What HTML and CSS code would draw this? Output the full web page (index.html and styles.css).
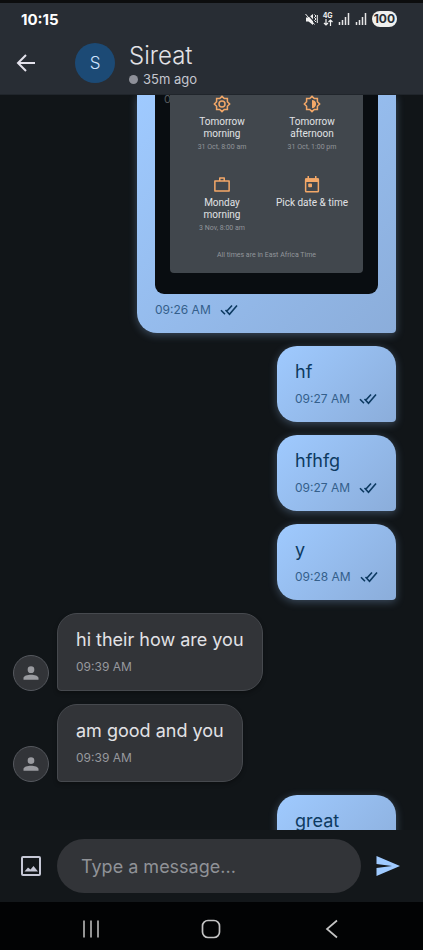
FILE: index.html
```html
<!DOCTYPE html>
<html lang="en">
<head>
<meta charset="utf-8">
<meta name="viewport" content="width=device-width, initial-scale=1">
<title>Sireat</title>
<link rel="stylesheet" href="styles.css">
</head>
<body>
<svg class="sprite" aria-hidden="true">
  <symbol id="checks" viewBox="0 0 18 12"><path d="M1 6.200l4 4M5.500 6l4 4.200L17 1.500M6.500 7.500L12 1.500" fill="none" stroke="currentColor" stroke-width="1.600"/></symbol>
  <symbol id="person" viewBox="0 0 24 24"><path d="M12 12a4 4 0 1 0 0-8 4 4 0 0 0 0 8zm0 2c-4 0-9 1.340-9 4v2h18v-2c0-2.660-5-4-9-4z" fill="currentColor"/></symbol>
  <symbol id="burst" viewBox="0 0 24 24"><path d="M12 1.800l3 3h4.200V9l3 3-3 3v4.200H15l-3 3-3-3H4.800V15l-3-3 3-3V4.800H9z" fill="none" stroke="currentColor" stroke-width="2"/></symbol>
</svg>

<div class="statusbar">
  <span class="clock">10:15</span>
  <div class="status-icons">
    <svg width="13" height="13" viewBox="0 0 13 13"><path d="M1 4.500h2.500L8 1v11L3.500 8.500H1z" fill="#f1f1f1"/><path d="M1.500 0l8 9" stroke="#282d34" stroke-width="1.200"/><path d="M.5 1l9 10.500M9.500 1.500l1.500 1.500-1.500 1.500L11 6 9.500 7.500 11 9M12.300 2v8" stroke="#f1f1f1" fill="none"/></svg>
    <div class="network"><span>4G</span><svg width="10" height="7" viewBox="0 0 10 7"><path d="M3 0v6M1 4l2 2 2-2M7.500 7V1M5.500 3l2-2 2 2" fill="none" stroke="#f1f1f1" stroke-width="1.200"/></svg></div>
    <svg width="12" height="12" viewBox="0 0 12 12"><path d="M1.500 9v3M4.500 7v5M7.500 4v8M10.500 0v12" stroke="#e6e6e6" stroke-width="1.500"/></svg>
    <svg width="12" height="12" viewBox="0 0 12 12"><path d="M1.500 9v3M4.500 7v5M7.500 4v8M10.500 0v12" stroke="#e6e6e6" stroke-width="1.500"/></svg>
    <span class="battery">100</span>
  </div>
</div>

<header class="header">
  <button class="icon-button back" aria-label="Back"><svg width="20" height="20" viewBox="0 0 20 20"><path d="M19 10H2M10 2L2 10l8 8" fill="none" stroke="#e4e2ec" stroke-width="2"/></svg></button>
  <div class="avatar">S</div>
  <div class="contact">
    <h1>Sireat</h1>
    <p><span class="dot"></span>35m ago</p>
  </div>
</header>

<main class="chat">
  <article class="bubble out photo">
    <div class="picture">
      <div class="behind">0</div>
      <div class="sheet">
        <div class="options">
          <div class="option"><svg width="18" height="18" viewBox="0 0 24 24"><use href="#burst"/><circle cx="12" cy="12" r="4" fill="none" stroke="currentColor" stroke-width="2"/></svg><b>Tomorrow<br>morning</b><small>31 Oct, 8:00 am</small></div>
          <div class="option"><svg width="18" height="18" viewBox="0 0 24 24"><use href="#burst"/><path d="M12 6.500a5.500 5.500 0 0 1 0 11z" fill="currentColor"/></svg><b>Tomorrow<br>afternoon</b><small>31 Oct, 1:00 pm</small></div>
          <div class="option"><svg width="18" height="18" viewBox="0 0 24 24"><path d="M2.500 6.500h19V20h-19zM9 6V2.500h6V6" fill="none" stroke="currentColor" stroke-width="2" stroke-linejoin="round"/></svg><b>Monday<br>morning</b><small>3 Nov, 8:00 am</small></div>
          <div class="option"><svg width="18" height="18" viewBox="0 0 24 24"><rect x="3.500" y="4" width="17" height="17" rx="1" fill="none" stroke="currentColor" stroke-width="2"/><path d="M3 3h18v5H3zM6 0h2v4H6zM16 0h2v4h-2z" fill="currentColor"/><rect x="7" y="10" width="5" height="5" rx="1" fill="currentColor"/></svg><b>Pick date &amp; time</b></div>
        </div>
        <p class="zone">All times are in East Africa Time</p>
      </div>
    </div>
    <div class="meta"><time>09:26 AM</time><svg width="18" height="12"><use href="#checks"/></svg></div>
  </article>

  <article class="bubble out"><p>hf</p><div class="meta"><time>09:27 AM</time><svg width="18" height="12"><use href="#checks"/></svg></div></article>
  <article class="bubble out"><p>hfhfg</p><div class="meta"><time>09:27 AM</time><svg width="18" height="12"><use href="#checks"/></svg></div></article>
  <article class="bubble out"><p>y</p><div class="meta"><time>09:28 AM</time><svg width="18" height="12"><use href="#checks"/></svg></div></article>

  <div class="incoming">
    <span class="person"><svg width="20" height="20"><use href="#person"/></svg></span>
    <article class="bubble in"><p>hi their how are you</p><div class="meta"><time>09:39 AM</time></div></article>
  </div>
  <div class="incoming">
    <span class="person"><svg width="20" height="20"><use href="#person"/></svg></span>
    <article class="bubble in"><p>am good and you</p><div class="meta"><time>09:39 AM</time></div></article>
  </div>

  <article class="bubble out"><p>great</p></article>
</main>

<form class="composer">
  <button type="button" class="icon-button attach" aria-label="Attach picture"><svg width="22" height="22" viewBox="0 0 22 22"><rect x="2" y="2" width="18" height="18" rx="1" fill="none" stroke="#c6c8d6" stroke-width="2"/><path d="M4.500 16.500L8 12.500l2.500 2L13.500 11l4.500 5.500z" fill="#c6c8d6"/></svg></button>
  <input type="text" aria-label="Message" placeholder="Type a message...">
  <button type="button" class="icon-button send" aria-label="Send"><svg width="24" height="22" viewBox="0 0 24 22"><path d="M.5 1L24 11 .5 21v-8L16 11 .5 9z" fill="#9fcaff"/></svg></button>
</form>

<nav class="navbar">
  <button class="icon-button" aria-label="Recent apps"><svg width="20" height="20" viewBox="0 0 20 20"><path d="M3 1.500v17M10 1.500v17M17 1.500v17" stroke="#b9b9b9" stroke-width="1.600"/></svg></button>
  <button class="icon-button" aria-label="Home"><svg width="20" height="20" viewBox="0 0 20 20"><rect x="1.500" y="1.500" width="17" height="17" rx="5.500" fill="none" stroke="#c4c4c4" stroke-width="1.700"/></svg></button>
  <button class="icon-button" aria-label="Go back"><svg width="20" height="20" viewBox="0 0 20 20"><path d="M15 1.500L5 10l10 8.500" fill="none" stroke="#c4c4c4" stroke-width="1.700"/></svg></button>
</nav>
</body>
</html>
```
FILE: styles.css
```css
* { box-sizing: border-box; }

body {
  margin: 0;
  height: 100vh;
  display: flex;
  flex-direction: column;
  overflow: hidden;
  background: #111518;
  color: #e2e2e6;
  font-family: Inter, Roboto, sans-serif;
}

h1, p { margin: 0; }
svg { display: block; flex: none; }
.sprite { position: absolute; width: 0; height: 0; }

.icon-button {
  display: grid;
  place-items: center;
  padding: 0;
  border: 0;
  background: none;
}

.statusbar {
  flex: none;
  height: 35px;
  padding: 0 26px 0 21px;
  display: flex;
  align-items: center;
  justify-content: space-between;
  border-top: 3px solid #0c0d0e;
  background: #282d34;
}
.clock { color: #fff; font-size: 15px; font-weight: 700; }
.status-icons { display: flex; align-items: center; gap: 5px; }
.network { width: 10px; font-size: 7px; line-height: 7px; font-weight: 700; color: #f1f1f1; }
.battery {
  padding: 0 2px;
  border-radius: 8px;
  background: #f0f0ee;
  color: #282d34;
  font-size: 12px;
  line-height: 16px;
  font-weight: 700;
}

.header {
  flex: none;
  height: 60px;
  padding: 0 16px 3px;
  display: flex;
  align-items: center;
  background: #282d34;
  border-bottom: 1px solid #20252b;
}
.avatar {
  width: 40px;
  height: 40px;
  margin: 0 14px 0 39px;
  border-radius: 50%;
  display: grid;
  place-items: center;
  background: #1c4a75;
  color: #d1e4ff;
  font-size: 17px;
  font-weight: 300;
}
.contact { padding-top: 4px; }
.contact h1 { font-size: 24px; line-height: 28px; font-weight: 300; }
.contact p {
  display: flex;
  align-items: center;
  gap: 5px;
  font-size: 13px;
  line-height: 18px;
  color: #c4c6cf;
}
.dot { width: 9px; height: 9px; border-radius: 50%; background: #8e9099; }

.chat {
  flex: 1;
  min-height: 0;
  overflow: hidden;
  padding: 0 27px 0 13px;
  display: flex;
  flex-direction: column;
  gap: 13px;
}
.chat > * { flex: none; }

.bubble { padding: 13px 18px 15px; border-radius: 20px; }
.bubble p { font-size: 18px; line-height: 26px; }
.meta { display: flex; align-items: center; gap: 9px; margin-top: 6px; }
.meta time { font-size: 12px; line-height: 16px; }

.out {
  align-self: flex-end;
  min-width: 119px;
  min-height: 76px;
  border-bottom-right-radius: 4px;
  background: linear-gradient(135deg, #9fcaff, #8badda);
  box-shadow: 0 2px 8px #9fcaff4d;
  color: #0d3a61;
}
.out .meta { color: #0d3a61; }
.out time { color: #345f8b; }

.incoming { display: flex; align-items: flex-end; gap: 8px; }
.in {
  border: 1px solid #46494e;
  border-bottom-left-radius: 4px;
  background: #323438;
  box-shadow: 0 2px 4px #0000004d;
}
.in time { color: #97999e; }
.person {
  width: 36px;
  height: 36px;
  border: 1px solid #55585e;
  border-radius: 50%;
  display: grid;
  place-items: center;
  background: #323438;
  color: #9a9ba0;
}

.photo {
  width: 259px;
  padding-top: 0;
  border-top-left-radius: 0;
  border-top-right-radius: 0;
}
.photo .meta { margin-top: 8px; }
.picture {
  position: relative;
  padding: 0 15px 21px;
  border-radius: 0 0 9px 9px;
  background: #090d11;
}
.behind { position: absolute; top: -3px; left: 9px; font-size: 11px; color: #555a5e; }
.sheet {
  position: relative;
  padding-bottom: 11px;
  border-radius: 0 0 4px 4px;
  background: #41474d;
  font-family: Roboto, sans-serif;
}
.options {
  display: grid;
  grid-template-columns: 104px 1fr;
  grid-template-rows: 81px 72px;
  padding-right: 13px;
}
.option {
  display: flex;
  flex-direction: column;
  align-items: center;
  text-align: center;
  color: #f3a868;
}
.option b {
  margin-top: 3px;
  color: #e0e2e5;
  font-size: 10px;
  line-height: 12px;
  font-weight: 400;
}
.option small { margin-top: 2px; color: #91959a; font-size: 7px; line-height: 10px; }
.zone { color: #92969b; text-align: center; }
.bubble .zone { font-size: 7px; line-height: 14px; }

.composer {
  flex: none;
  height: 72px;
  padding: 0 23px 0 20px;
  display: flex;
  align-items: center;
  background: #13171a;
}
.composer input {
  flex: 1;
  min-width: 0;
  height: 54px;
  margin: 0 15px;
  padding: 0 24px;
  border: 0;
  border-radius: 27px;
  background: #323438;
  color: #e2e2e6;
  font: 18px Inter, Roboto, sans-serif;
}
.composer input::placeholder { color: #909297; opacity: 1; }

.navbar {
  flex: none;
  height: 48px;
  padding: 6px 31px 0;
  display: grid;
  grid-template-columns: repeat(3, 1fr);
  align-items: center;
  background: #020304;
}
```
